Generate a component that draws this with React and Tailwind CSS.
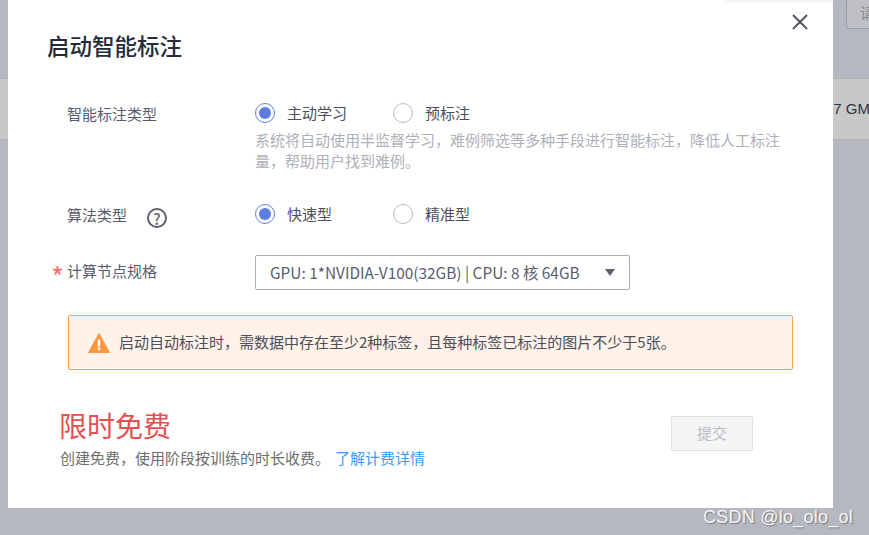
import { X } from "lucide-react";

const font = "font-['Noto_Sans_CJK_SC','Noto_Sans',sans-serif]";

function Radio({ checked, label }) {
  return (
    <div className="flex items-center w-[138px] gap-[12px]">
      <span
        className={`flex items-center justify-center w-5 h-5 rounded-full border bg-white ${
          checked ? "border-[#5f7fe6]" : "border-[#b9bcc4]"
        }`}
      >
        {checked && <span className="w-3 h-3 rounded-full bg-[#5d7ce0]" />}
      </span>
      <span className="text-[15px] leading-5 text-[#4d505a]">{label}</span>
    </div>
  );
}

export default function App() {
  return (
    <div className={`relative w-[869px] h-[535px] overflow-hidden bg-[#b5b8c1] ${font}`}>
      {/* page behind the dimmed overlay */}
      <div className="flex justify-end h-[78px]">
        <div className="w-[23px] h-[30px] -mt-px pl-[13px] pt-[2px] border border-r-0 border-[#9c9da2] rounded-l-[3px] bg-[#bfc0c5] text-[15px] whitespace-nowrap overflow-hidden text-[#8a8a8a]">
          请
        </div>
      </div>
      <div className="flex justify-end items-center h-[62px] border-y border-[#b2b2b2] bg-[#c8c8c8] text-[15px] text-[#33343c] font-['Liberation_Sans',sans-serif]">
        <span className="-mr-px">7 GM</span>
      </div>

      {/* dialog */}
      <div className="absolute left-2 top-0 w-[825px] h-[508px] bg-white pl-[39px] pt-[29px]">
        <div className="absolute top-0 right-0 w-[108px] h-[4px] rounded-bl-[4px] bg-gradient-to-b from-[#f1f1f3] to-white" />
        <button className="absolute top-[9px] right-[20px] text-[#50535e]">
          <X size={26} strokeWidth={1.7} />
        </button>
        <h2 className="text-[22.5px] leading-8 font-medium text-[#252b3a]">启动智能标注</h2>

        <div className="ml-[13px] mt-[42px] flex">
          <div className="w-[195px] pl-[7px] pt-[1px] text-[15px] leading-5 text-[#575d6c]">智能标注类型</div>
          <div className="w-[540px]">
            <div className="flex">
              <Radio checked label="主动学习" />
              <Radio label="预标注" />
            </div>
            <p className="mt-[6px] w-[530px] text-[15px] leading-[21px] text-[#adb0b8]">
              系统将自动使用半监督学习，难例筛选等多种手段进行智能标注，降低人工标注量，帮助用户找到难例。
            </p>
          </div>
        </div>

        <div className="ml-[13px] mt-[29px] flex">
          <div className="w-[195px] pl-[7px] flex items-center text-[15px] leading-5 text-[#575d6c]">
            <span className="pt-[2px]">算法类型</span>
            <span className="ml-[20px] mt-[8px] flex items-center justify-center w-5 h-5 rounded-full border-2 border-[#5c5f6b] text-[15px] font-medium leading-none text-[#5c5f6b]">
              ?
            </span>
          </div>
          <div className="flex">
            <Radio checked label="快速型" />
            <Radio label="精准型" />
          </div>
        </div>

        <div className="ml-[4px] mt-[27px] flex items-center">
          <div className="w-[204px] pb-[3px] flex items-center text-[15px] leading-5 text-[#575d6c]">
            <span className="w-[16px] h-5 text-[#f66f6a] text-[28px] leading-[30px]">*</span>
            <span>计算节点规格</span>
          </div>
          <div className="flex items-center justify-between w-[375px] h-[35px] px-[14px] rounded-[2px] border border-[#adb0b8] text-[15.4px] text-[#575d6c]">
            <span>GPU: 1*NVIDIA-V100(32GB) | CPU: 8 核 64GB</span>
            <svg width="10" height="7" viewBox="0 0 10 7">
              <path d="M0 0h10L5 7z" fill="#5c6070" />
            </svg>
          </div>
        </div>

        <div className="ml-[21px] mt-[25px] flex items-center w-[725px] h-[55px] pl-[19px] rounded-[2px] border border-[#f9a24c] bg-[#fff2e8] text-[15px] text-[#4c4f59]">
          <svg width="22" height="20" viewBox="0 0 22 20" className="mr-[9px] shrink-0">
            <path d="M11 0.5 L21.5 19.5 H0.5 Z" fill="#fa9841" stroke="#fa9841" strokeLinejoin="round" />
            <rect x="9.8" y="6.5" width="2.4" height="7" fill="#fff" />
            <rect x="9.8" y="14.7" width="2.4" height="2.4" fill="#fff" />
          </svg>
          启动自动标注时，需数据中存在至少2种标签，且每种标签已标注的图片不少于5张。
        </div>

        <div className="ml-[12px] mt-[35px] flex items-start">
          <div className="w-[612px]">
            <div className="text-[28px] leading-[40px] text-[#e25050]">限时免费</div>
            <div className="mt-[3px] ml-[1px] text-[15px] leading-5 text-[#6e6e6e]">
              创建免费，使用阶段按训练的时长收费。
              <span className="ml-[5px] text-[#3d9bf5]">了解计费详情</span>
            </div>
          </div>
          <button className="mt-[11px] w-[82px] h-[35px] rounded-[2px] border border-[#dfe1e6] bg-[#f5f5f6] text-[15px] text-[#b9bbc3]">
            提交
          </button>
        </div>
      </div>

      <div className="absolute left-[703px] top-[505px] text-[18px] tracking-[0.25px] leading-6 text-[#f4f4f4] font-['Liberation_Sans',sans-serif] [text-shadow:1px_1px_1px_#77797f]">
        CSDN @lo_olo_ol
      </div>
    </div>
  );
}
